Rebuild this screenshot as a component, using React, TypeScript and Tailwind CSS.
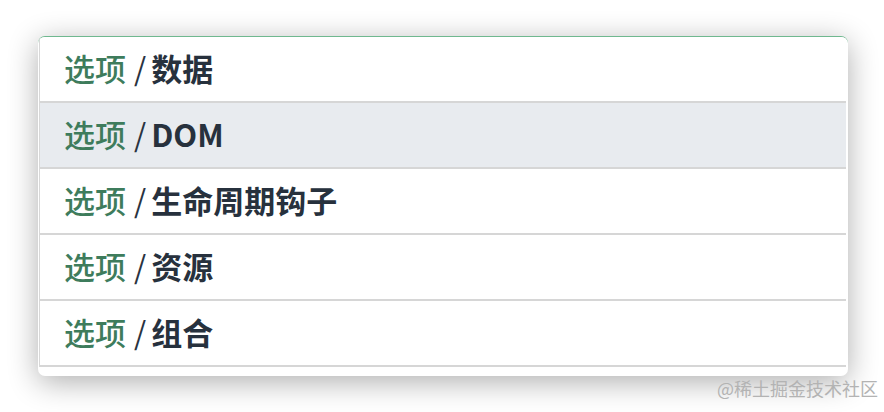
// 选项 API 面包屑列表
const items = ["数据", "DOM", "生命周期钩子", "资源", "组合"];

export default function App() {
  return (
    <div
      className="relative w-[884px] h-[412px] bg-white pl-[38px] pt-[36px]"
      style={{ fontFamily: '"Noto Sans CJK SC", "Noto Sans", sans-serif' }}
    >
      <div className="w-[810px] h-[340px] rounded-[7px] bg-white border-t border-[#6fb88f] shadow-[0_6px_30px_rgba(0,0,0,0.32)] pb-[8px] overflow-hidden">
        <div className="ml-[1px] mr-[2px] border-l border-[#d8d8d8]">
          {items.map((label, i) => (
            <div
              key={label}
              className={`h-[66px] flex items-center pl-[24px] pb-[3px] border-b-2 border-[#d6d6d6] text-[31px] leading-none ${
                i === 1 ? "bg-[#e8ebef]" : "bg-white"
              }`}
            >
              <span className="font-medium text-[#3e7c5c]">选项</span>
              <span className="pl-[8px] pr-[5px] font-normal text-[#2a3340]">/</span>
              <span className="font-semibold text-[#27313d]">{label}</span>
            </div>
          ))}
        </div>
      </div>
      <span className="absolute right-[6px] bottom-[15px] text-[18px] leading-none text-[#b3b3b3]">
        @稀土掘金技术社区
      </span>
    </div>
  );
}
